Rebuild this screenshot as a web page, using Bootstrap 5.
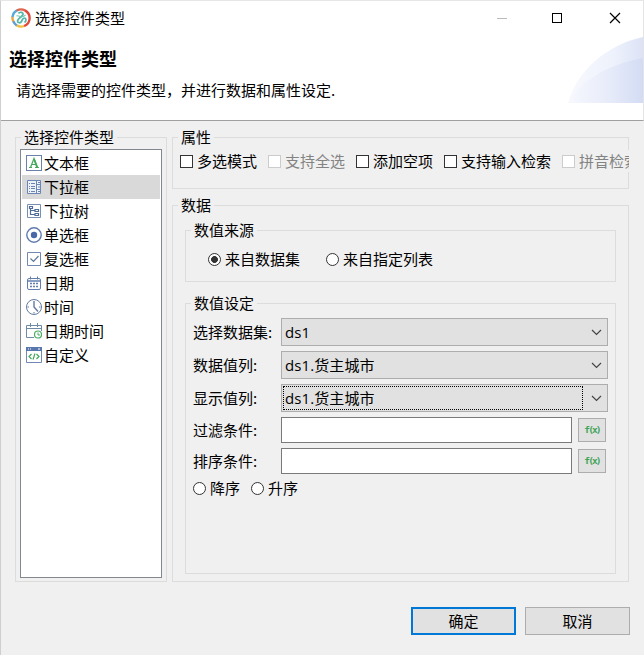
<!DOCTYPE html>
<html lang="zh-CN">
<head>
<meta charset="utf-8">
<title>选择控件类型</title>
<link href="https://cdn.jsdelivr.net/npm/bootstrap@5.3.0/dist/css/bootstrap.min.css" rel="stylesheet">
<style>
body{font-family:"Open Sans","Noto Sans CJK SC",sans-serif;font-size:15px;line-height:20px;color:#000;background:#f0f0f0}
.cjk,.opt,.grp-title,.field-label,.cmd,.type-item{font-family:"Noto Sans CJK SC",sans-serif}
.dialog{width:644px;height:655px;border-left:1px solid #cfcfcf;border-top:1px solid #e6e6e6;background:#f0f0f0;overflow:hidden}
.head{height:120px;border-bottom:1px solid #a0a0a0;border-right:1px solid #e4e4e4}
.titlebar{height:33px;padding-left:10px}
.win-btns{width:173px}
.headline{font-size:18px;line-height:24px;padding:12px 0 0 8px}
.desc{padding:10px 0 0 15px}
.swoosh{right:0;top:35px}
.main{padding:16px 15px 0 14px;gap:5px;height:461px}
.grp{border:1px solid #dcdcdc}
.grp-title{width:fit-content;margin:-10px 0 0 5px;padding:0 3px;background:#f0f0f0;height:20px;line-height:18px}
.g-types{width:152px;flex:none}
.right-col{min-width:0}
.g-props{height:52px;margin-bottom:16px}
.g-data{height:377px;padding:0 12px}
.g-data>.grp-title{margin-left:-7px}
.g-source{width:431px;height:52px;margin-top:14px}
.g-set{width:431px;height:271px;margin-top:21px}
.types{margin:1px 4px 3px;border:1px solid #828790;background:#fff;padding:1px;flex:1}
.type-item{height:24px;padding-left:4px;gap:2px}
.type-item.on{background:#d9d9d9}
.opts{gap:11px}
.opt{gap:4px;white-space:nowrap}
.opt.off{color:#838383}
.opt input{appearance:none;width:13px;height:13px;margin:0;border:1px solid #333;background:#fff;flex:none}
.opt.off input{border-color:#ccc}
.opt input[type=radio]{border-radius:50%}
.opt input[type=radio]:checked{background:radial-gradient(circle,#333 0 3.1px,#fff 3.7px)}
.props-row{margin:2px -1px 0 7px;height:22px;background:#f0f0f0;overflow:hidden}
.source-row{padding:8px 0 0 22px;gap:26px}
.fields{padding:4px 7px 0}
.field-label{width:88px;flex:none}
.combo{height:28px;border:1px solid #adadad;background:#e1e1e1;padding:1px 5px 1px 1px;flex:1}
.combo-text{border:1px solid transparent;width:300px;height:24px;line-height:22px;padding-left:1px;letter-spacing:.1px}
.combo-text.focus{border:1px dotted #000}
.entry{width:291px;height:26px;border:1px solid #7a7a7a;background:#fff;padding:0 3px}
.fx{width:28px;height:24px;border:1px solid #adadad;background:#e1e1e1;margin-left:6px;padding:0;font:700 9.5px/14px "DejaVu Sans Mono",monospace;letter-spacing:-1.9px;color:#3fa45a;text-align:center}
.r6{margin-bottom:5px}
.order-row{margin-top:-1px}
.cmds{gap:9px;padding:25px 14px 0 0}
.cmd{width:105px;height:28px;border:1px solid #adadad;background:#e1e1e1;padding:0;color:#000}
.cmd.ok{border:2px solid #0078d7}
svg{display:block;flex:none}
</style>
</head>
<body>
<div class="dialog d-flex flex-column position-relative">
  <header class="head bg-white">
    <div class="titlebar d-flex align-items-center justify-content-between">
      <div class="d-flex align-items-center cjk">
        <svg width="20" height="20" viewBox="0 0 20 20" fill="none" class="me-1"><g stroke-width="2.4"><path d="M2.6 14A8.6 8.6 0 0 1 1.5 8.500" stroke="#f0a53c"/><path d="M1.5 9A8.6 8.6 0 0 1 6 2.400" stroke="#58a9dc"/><path d="M5.800 2.500A8.600 8.600 0 0 1 14 2.400" stroke="#e0654f"/><path d="M13.800 2.300A8.600 8.600 0 0 1 13 18.100" stroke="#e2473e"/><path d="M13.200 18A8.600 8.600 0 0 1 5.500 17.300" stroke="#f3bd42"/><path d="M5.700 17.400A8.600 8.600 0 0 1 2.300 13.300" stroke="#5e9fd8"/></g><path d="M7.500 5.500c1-2 5-1.500 4.500 1-.4 2-5.500 4-5.500 6.500 0 2 3 2.500 4 .5s1-3.500 3-3.500c2 0 2 3 0 4.500" stroke="#55b5a9" stroke-width="1.700"/><path d="M5.500 8c2-1 3 1 5 1 2.500 0 3-1 4-2" stroke="#78c7b3" stroke-width="1.200"/></svg>
        <span>选择控件类型</span>
      </div>
      <div class="win-btns">
        <svg width="173" height="33" fill="none" shape-rendering="crispEdges"><path d="M26.500 17.500h10" stroke="#bbb"/><rect x="82.500" y="12.500" width="9" height="9" stroke="#000"/><path d="M140 12l10 10M150 12l-10 10" stroke="#000" shape-rendering="auto" stroke-width="1.200"/></svg>
      </div>
    </div>
    <div class="headline fw-bold cjk">选择控件类型</div>
    <div class="desc cjk">请选择需要的控件类型，并进行数据和属性设定.</div>
    <svg class="swoosh position-absolute" width="76" height="67" viewBox="0 0 76 67"><defs><linearGradient id="a"><stop stop-color="#f8f9fe"/><stop offset=".6" stop-color="#eef2fc"/><stop offset="1" stop-color="#dce3f6"/></linearGradient><linearGradient id="b"><stop stop-color="#f8f9fe"/><stop offset=".6" stop-color="#e5eaf9"/><stop offset="1" stop-color="#d3dcf4"/></linearGradient></defs><path d="M0 67C9 35 38 9 75 1V67Z" fill="url(#a)"/><path d="M0 67C14 43 42 28 75 22V67Z" fill="url(#b)"/></svg>
  </header>

  <main class="main d-flex">
    <section class="grp g-types d-flex flex-column">
      <div class="grp-title">选择控件类型</div>
      <div class="types">
        <div class="type-item d-flex align-items-center"><svg width="16" height="16" fill="none"><rect x=".5" y=".5" width="15" height="15" stroke="#6a82a8"/><path d="M3 12.500h3M9 12.500h4M4.500 12.500L8 3.500l3.500 9M5.700 9.500h4.500" stroke="#45a85c" stroke-width="1.200"/><path d="M8 4l3 8" stroke="#45a85c" stroke-width="1.800"/></svg>文本框</div>
        <div class="type-item on d-flex align-items-center"><svg width="16" height="16" fill="none" stroke="#6c86b4"><path d="M1.500 1.500h13v13h-13zM10.500 1.500v13M10.500 5.500h4M10.500 10.500h4" fill="#edf1f8"/><path d="M3 4.500h1M5 4.500h4M3 7.500h1M5 7.500h4M3 9.500h1M5 9.500h4M3 12.500h1M5 12.500h4"/><path d="M12 3.500h2M12 12.500h2M12 8h2"/></svg>下拉框</div>
        <div class="type-item d-flex align-items-center"><svg width="16" height="16" fill="none" stroke="#4e6c98"><path d="M1.500 1.500h13v13h-13z" stroke="#7890b0"/><path d="M3.500 3.500h3v2h-3zM4.500 6v5.500h4M5 7.500h4M9 6.500h3.500v2H9zM9 10.500h3.500v2H9z" stroke-width="1.200"/></svg>下拉树</div>
        <div class="type-item d-flex align-items-center"><svg width="16" height="16"><circle cx="8" cy="8" r="7.200" fill="none" stroke="#607bae" stroke-width="1.400"/><circle cx="8" cy="8" r="3.200" fill="#4868a8"/></svg>单选框</div>
        <div class="type-item d-flex align-items-center"><svg width="16" height="16" fill="none"><path d="M1.500 1.500h13v13h-13z" stroke="#7188b0"/><path d="M4.500 7.500l3 3 5-5.500" stroke="#5e7897" stroke-width="1.200"/></svg>复选框</div>
        <div class="type-item d-flex align-items-center"><svg width="16" height="16" fill="none" stroke="#617eae"><rect x="1.500" y="3.500" width="13" height="11" rx="1.500"/><path d="M1.500 6h13" stroke-width="1.500"/><path d="M4.500 1.500v3M11.500 1.500v3"/><path d="M4 8.500h8M4 11.500h8" stroke-width="1.500" stroke-dasharray="2 1"/></svg>日期</div>
        <div class="type-item d-flex align-items-center"><svg width="16" height="16" fill="none" stroke="#627b9f"><circle cx="8" cy="8" r="7.500"/><path d="M8 2v6l4 4.500" stroke-width="1.400"/><path d="M1.500 8H3M13 8h1.500M8 13v1.500"/></svg>时间</div>
        <div class="type-item d-flex align-items-center"><svg width="16" height="16" fill="none"><path d="M8 14.500H.5v-12h15V8M.5 5.500h15M4.500 0v4M11.500 0v4" stroke="#6f8aa5"/><circle cx="12" cy="11.500" r="3.500" stroke="#4aad61" stroke-width="1.200"/><path d="M12 9.500v2.500h2" stroke="#4aad61"/></svg>日期时间</div>
        <div class="type-item d-flex align-items-center"><svg width="16" height="16" fill="none"><path d="M.5.500h15v15H.5z" stroke="#7189b5"/><path d="M0 0h16v4H0z" fill="#5878ad"/><path d="M2 2h1M4 2h1M12 2h2" stroke="#fff"/><path d="M5.500 7L3 9.500 5.500 12M10.500 7L13 9.500 10.500 12M9 6.500l-2 6" stroke="#45a85c" stroke-width="1.200"/></svg>自定义</div>
      </div>
    </section>

    <div class="right-col flex-grow-1">
      <section class="grp g-props">
        <div class="grp-title">属性</div>
        <div class="props-row opts d-flex align-items-center">
          <label class="opt d-flex align-items-center"><input type="checkbox">多选模式</label>
          <label class="opt off d-flex align-items-center"><input type="checkbox" disabled>支持全选</label>
          <label class="opt d-flex align-items-center"><input type="checkbox">添加空项</label>
          <label class="opt d-flex align-items-center"><input type="checkbox">支持输入检索</label>
          <label class="opt off d-flex align-items-center"><input type="checkbox" disabled>拼音检索</label>
        </div>
      </section>
      <section class="grp g-data">
        <div class="grp-title">数据</div>
        <div class="grp g-source">
          <div class="grp-title">数值来源</div>
          <div class="source-row d-flex">
            <label class="opt d-flex align-items-center"><input type="radio" name="src" checked>来自数据集</label>
            <label class="opt d-flex align-items-center"><input type="radio" name="src">来自指定列表</label>
          </div>
        </div>
        <div class="grp g-set">
          <div class="grp-title">数值设定</div>
          <div class="fields">
            <div class="d-flex align-items-center r6"><span class="field-label">选择数据集:</span><div class="combo d-flex align-items-center justify-content-between"><span class="combo-text">ds1</span><svg width="11" height="7" fill="none"><path d="M1 1l4.500 4.500L10 1" stroke="#444" stroke-width="1.200"/></svg></div></div>
            <div class="d-flex align-items-center r6"><span class="field-label">数据值列:</span><div class="combo d-flex align-items-center justify-content-between"><span class="combo-text">ds1.货主城市</span><svg width="11" height="7" fill="none"><path d="M1 1l4.500 4.500L10 1" stroke="#444" stroke-width="1.200"/></svg></div></div>
            <div class="d-flex align-items-center r6"><span class="field-label">显示值列:</span><div class="combo d-flex align-items-center justify-content-between"><span class="combo-text focus">ds1.货主城市</span><svg width="11" height="7" fill="none"><path d="M1 1l4.500 4.500L10 1" stroke="#444" stroke-width="1.200"/></svg></div></div>
            <div class="d-flex align-items-center r6"><span class="field-label">过滤条件:</span><input class="entry" type="text" aria-label="过滤条件"><button class="fx" type="button">f(x)</button></div>
            <div class="d-flex align-items-center r6"><span class="field-label">排序条件:</span><input class="entry" type="text" aria-label="排序条件"><button class="fx" type="button">f(x)</button></div>
            <div class="opts order-row d-flex">
              <label class="opt d-flex align-items-center"><input type="radio" name="ord">降序</label>
              <label class="opt d-flex align-items-center"><input type="radio" name="ord">升序</label>
            </div>
          </div>
        </div>
      </section>
    </div>
  </main>

  <footer class="cmds d-flex justify-content-end">
    <button class="cmd ok" type="button">确定</button>
    <button class="cmd" type="button">取消</button>
  </footer>
</div>
<script src="https://cdn.jsdelivr.net/npm/bootstrap@5.3.0/dist/js/bootstrap.bundle.min.js"></script>
</body>
</html>
